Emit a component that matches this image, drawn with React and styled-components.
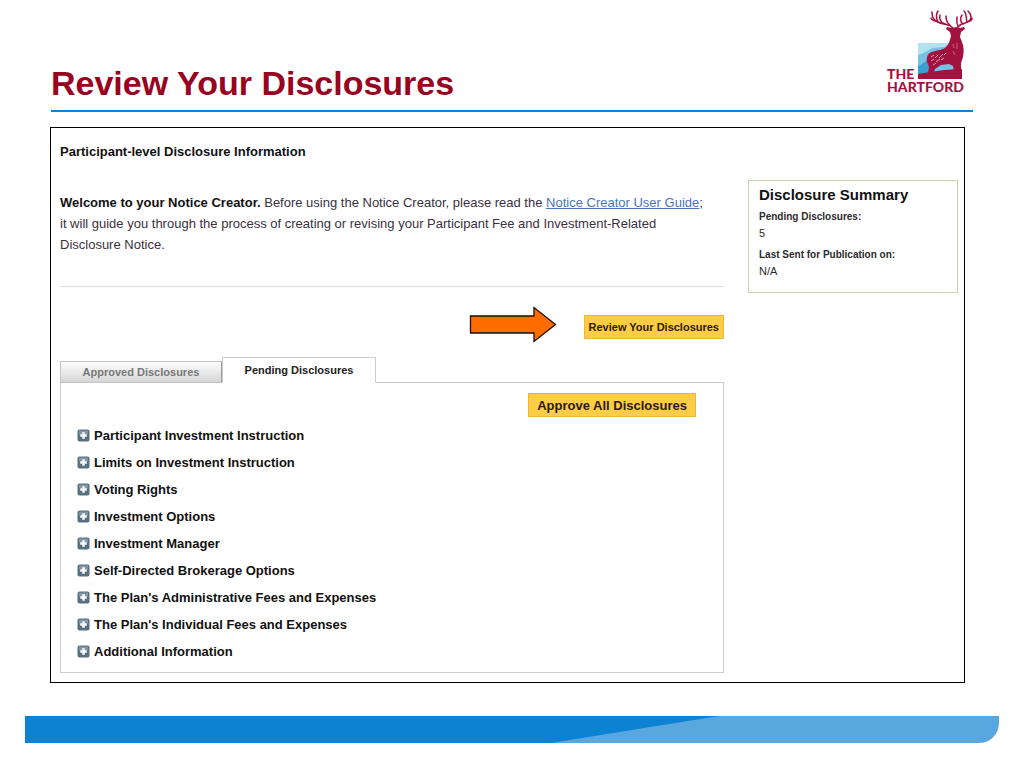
import React, { useState } from "react";
import styled, { createGlobalStyle, css } from "styled-components";

const GlobalStyle = createGlobalStyle`
  * {
    box-sizing: border-box;
  }
  body {
    margin: 0;
    background: #ffffff;
    color: #111111;
    font-family: "Liberation Sans", Arial, sans-serif;
    font-size: 13px;
    line-height: 22px;
  }
`;
const Page = styled.div`
  padding: 8px 25px 25px;
`;
const Header = styled.header`
  display: flex;
  justify-content: space-between;
  align-items: flex-end;
  height: 104px;
  margin: 0 26px;
  border-bottom: 2px solid #1c7fc6;
`;
const Title = styled.h1`
  margin: 0;
  padding-bottom: 7px;
  font-size: 34px;
  line-height: 40px;
  color: #98041f;
`;
const LogoArt = styled.svg`
  display: block;
  width: 88px;
  height: 88px;
  margin-bottom: 14px;
`;
const Panel = styled.main`
  display: grid;
  grid-template-columns: minmax(0, 664fr) minmax(0, 210fr);
  column-gap: 24px;
  margin: 15px 34px 0 25px;
  padding: 13px 6px 9px 9px;
  border: 1px solid #000000;
`;
const PanelTitle = styled.h2`
  grid-column: 1 / 3;
  margin: 0 0 29px;
  font-size: 13px;
  line-height: 22px;
`;
const Intro = styled.div`
  padding-bottom: 31px;
  border-bottom: 1px solid #dedede;
`;
const IntroText = styled.p`
  margin: 0;
  padding-right: 14px;
  line-height: 21px;
  color: #3b3142;
  b {
    color: #111111;
  }
`;
const GuideLink = styled.a`
  color: #4a74b8;
`;
const ReviewRow = styled.div`
  display: flex;
  justify-content: flex-end;
  align-items: center;
  gap: 27px;
  padding: 19px 0 9px;
`;
const Arrow = styled.svg`
  display: block;
  width: 88px;
  height: 42px;
`;
const ActionButton = styled.button`
  height: 24px;
  padding: 0 ${props => (props.$large ? 8 : 4)}px;
  border: 1px solid #e8b83c;
  background: #ffcc45;
  color: #2a1a05;
  font-family: inherit;
  font-size: ${props => (props.$large ? 13 : 11)}px;
  font-weight: bold;
  cursor: pointer;
`;
const Tabs = styled.div`
  display: flex;
  align-items: flex-end;
  margin-bottom: -1px;
`;
const Tab = styled.button`
  position: relative;
  width: 162px;
  height: 22px;
  padding: 0;
  border: 1px solid #c4c4c4;
  border-right-color: #9c9c9c;
  background: linear-gradient(#fdfdfd, #d6d6d6);
  color: #777777;
  font-family: inherit;
  font-size: 11px;
  font-weight: bold;
  cursor: pointer;
  ${props =>
    props.$active &&
    css`
      width: 154px;
      height: 26px;
      border-color: #cccccc;
      border-bottom-color: #ffffff;
      background: #ffffff;
      color: #222222;
    `}
`;
const TabPanel = styled.section`
  padding: 10px 27px 7px 16px;
  border: 1px solid #cccccc;
`;
const ApproveRow = styled.div`
  display: flex;
  justify-content: flex-end;
  padding-bottom: 5px;
`;
const DisclosureList = styled.ul`
  margin: 0;
  padding: 0;
  list-style: none;
`;
const DisclosureButton = styled.button`
  display: flex;
  align-items: center;
  gap: 4px;
  height: 27px;
  padding: 0;
  border: none;
  background: transparent;
  color: #111111;
  font-family: inherit;
  font-size: 13px;
  font-weight: bold;
  cursor: pointer;
`;
const PlusArt = styled.svg`
  display: block;
  width: 13px;
  height: 13px;
`;
const Summary = styled.aside`
  align-self: start;
  min-height: 113px;
  margin-top: -12px;
  padding: 3px 10px;
  border: 1px solid #cfcfa6;
`;
const SummaryTitle = styled.h3`
  margin: 0 0 3px;
  font-size: 15px;
  line-height: 22px;
`;
const SummaryData = styled.dl`
  margin: 0;
  font-size: 11px;
  line-height: 16px;
  color: #2b2b2b;
  dt {
    font-size: 10px;
    font-weight: bold;
  }
  dd {
    margin: 0 0 6px;
  }
`;
const FooterArt = styled.svg`
  display: block;
  width: 100%;
  height: 27px;
  margin-top: 33px;
  border-bottom-right-radius: 20px;
`;

const disclosures = [
  "Participant Investment Instruction",
  "Limits on Investment Instruction",
  "Voting Rights",
  "Investment Options",
  "Investment Manager",
  "Self-Directed Brokerage Options",
  "The Plan's Administrative Fees and Expenses",
  "The Plan's Individual Fees and Expenses",
  "Additional Information"
];

const Logo = () => (
  <LogoArt viewBox="885 8 88 88" role="img" aria-label="The Hartford">
    <path d="M918 43h35v36h-35z" fill="#b4e1f0" />
    <path d="M918 55c6-1 9-5 15-7l20-2v33h-35z" fill="#74c3e3" />
    <path d="M918 66c5-2 8-6 13-7l22 2v18h-35z" fill="#3aa0d3" />
    <path d="M935 64h19v8h-19z" fill="#74c3e3" />
    <path d="M918 74l12-2 14-2 18-1v10h-44z" fill="#a3123f" />
    <path
      d="M928 73l1-6-2-5c-1-5 1-9 5-10 6-2 11-2 14-5 3-3 4-7 5-11l-1-4-4-3 1-2 5 1 4-1 4 1 4-1 1 2-4 3-1 5 2 5c2 5 2 10 1 15l-2 6v9h-7l-1-6-4-2-8 1-6 4-2 4z"
      fill="#a3123f"
    />
    <path
      d="M931 57l3-2M935 58l3-3M939 58l4-4M931 61l3-2M936 62l4-3M941 60l3-2M933 65l3-2M944 55l2-2"
      stroke="#d9a0b5"
      strokeWidth="1"
    />
    <path d="M953 44l1 4M957 43v6M953 51l2 4" stroke="#c56286" />
    <g
      fill="none"
      stroke="#a3123f"
      strokeWidth="1.5"
      strokeLinecap="round"
      strokeLinejoin="round"
    >
      <path d="M953 29c-1-4-5-4-9-5-5-1-8-2-10-5-2-2-2-4-2-7" />
      <path d="M936 21c-3 0-4-1-5-3M938 22c-2-4-2-8 0-11M945 24c-5-2-6-5-5-9M950 25c-3-2-4-5-4-9" />
      <path d="M957 29c1-4 4-5 8-6 4-1 6-3 6-6 0-2-1-4-3-6" />
      <path d="M969 21c2 0 3-1 3-3M967 22c-1-3 0-8-3-11M963 24c-3-2-3-6-1-9M958 26c-2-3-1-5-1-9" />
    </g>
    <text
      x="887"
      y="79"
      fill="#a3123f"
      fontFamily="Lato, sans-serif"
      fontSize="14"
      fontWeight="900"
    >
      THE
    </text>
    <text
      x="887"
      y="92"
      fill="#a3123f"
      fontFamily="Lato, sans-serif"
      fontSize="14"
      fontWeight="900"
    >
      HARTFORD
    </text>
  </LogoArt>
);

const PlusIcon = () => (
  <PlusArt viewBox="0 0 13 13" aria-hidden="true">
    <rect x="0.5" y="0.5" width="12" height="12" rx="2" fill="#56707f" />
    <path d="M2 1.500h9v4H2z" fill="#8096a4" />
    <path d="M5.500 3.500h2v2h2v2h-2v2h-2v-2h-2v-2h2z" fill="#ffffff" stroke="#ffffff" strokeWidth="0.500" />
  </PlusArt>
);

export default () => {
  const [tab, setTab] = useState("pending");
  return (
    <Page>
      <GlobalStyle />
      <Header>
        <Title>Review Your Disclosures</Title>
        <Logo />
      </Header>
      <Panel>
        <PanelTitle>Participant-level Disclosure Information</PanelTitle>
        <div>
          <Intro>
            <IntroText>
              <b>Welcome to your Notice Creator.</b> Before using the Notice
              Creator, please read the{" "}
              <GuideLink href="#guide">Notice Creator User Guide</GuideLink>; it
              will guide you through the process of creating or revising your
              Participant Fee and Investment-Related Disclosure Notice.
            </IntroText>
          </Intro>
          <ReviewRow>
            <Arrow viewBox="0 0 88 42" aria-hidden="true">
              <path
                d="M1.500 10H65V1.500L86.500 18.500 65 35.500V27H1.500z"
                fill="#ff6d00"
                stroke="#1a0d00"
                strokeWidth="1.300"
              />
            </Arrow>
            <ActionButton>Review Your Disclosures</ActionButton>
          </ReviewRow>
          <Tabs role="tablist">
            <Tab
              role="tab"
              aria-selected={tab === "approved"}
              $active={tab === "approved"}
              onClick={() => setTab("approved")}
            >
              Approved Disclosures
            </Tab>
            <Tab
              role="tab"
              aria-selected={tab === "pending"}
              $active={tab === "pending"}
              onClick={() => setTab("pending")}
            >
              Pending Disclosures
            </Tab>
          </Tabs>
          <TabPanel>
            <ApproveRow>
              <ActionButton $large>Approve All Disclosures</ActionButton>
            </ApproveRow>
            <DisclosureList>
              {disclosures.map(name => (
                <li key={name}>
                  <DisclosureButton>
                    <PlusIcon />
                    {name}
                  </DisclosureButton>
                </li>
              ))}
            </DisclosureList>
          </TabPanel>
        </div>
        <Summary>
          <SummaryTitle>Disclosure Summary</SummaryTitle>
          <SummaryData>
            <dt>Pending Disclosures:</dt>
            <dd>5</dd>
            <dt>Last Sent for Publication on:</dt>
            <dd>N/A</dd>
          </SummaryData>
        </Summary>
      </Panel>
      <footer>
        <FooterArt
          viewBox="0 0 974 27"
          preserveAspectRatio="none"
          aria-hidden="true"
        >
          <path d="M0 0h974v27H0z" fill="#58a8df" />
          <path d="M0 0h694L526 27H0z" fill="#0d82d3" />
        </FooterArt>
      </footer>
    </Page>
  );
};
